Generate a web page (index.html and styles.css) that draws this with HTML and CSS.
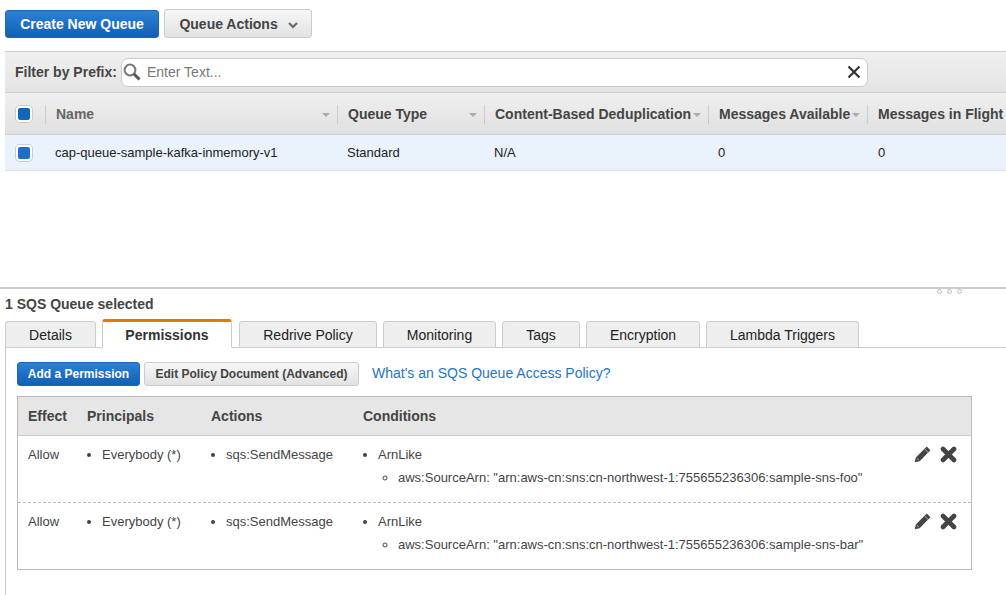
FILE: index.html
```html
<!DOCTYPE html>
<html lang="en">
<head>
    <meta charset="UTF-8">
    <meta name="viewport" content="width=device-width, initial-scale=1.0">
    <title>SQS Queues</title>
    <link rel="stylesheet" href="styles.css">
</head>
<body>
    <div class="toolbar">
        <button class="btn btn-primary btn-create">Create New Queue</button>
        <button class="btn btn-actions">Queue Actions
            <svg class="caret" width="10" height="7" viewBox="0 0 10 7"><path d="M1 1 L5 5 L9 1" fill="none" stroke="#666" stroke-width="2"/></svg>
        </button>
    </div>

    <div class="list-panel">
        <div class="filter-bar">
            <label class="filter-label">Filter by Prefix:</label>
            <div class="filter-input">
                <svg class="search-icon" width="18" height="18" viewBox="0 0 18 18"><circle cx="7" cy="7" r="5.4" fill="none" stroke="#777" stroke-width="2"/><path d="M11 11 L16.5 16.5" stroke="#555" stroke-width="3"/></svg>
                <span class="placeholder">Enter Text...</span>
                <svg class="clear-icon" width="14" height="14" viewBox="0 0 14 14"><path d="M1.5 1.5 L12.5 12.5 M12.5 1.5 L1.5 12.5" stroke="#333" stroke-width="2.2"/></svg>
            </div>
        </div>
        <div class="queue-head">
            <div class="cell-check"><span class="check"></span></div>
            <div class="col col-name">Name<i class="sort"></i></div>
            <div class="col col-type">Queue Type<i class="sort"></i></div>
            <div class="col col-dedup">Content-Based Deduplication<i class="sort"></i></div>
            <div class="col col-avail">Messages Available<i class="sort"></i></div>
            <div class="col col-flight">Messages in Flight</div>
        </div>
        <div class="queue-row">
            <div class="cell-check"><span class="check check-on"></span></div>
            <div class="col col-name">cap-queue-sample-kafka-inmemory-v1</div>
            <div class="col col-type">Standard</div>
            <div class="col col-dedup">N/A</div>
            <div class="col col-avail">0</div>
            <div class="col col-flight">0</div>
        </div>
    </div>

    <div class="splitter">
        <div class="grip"><i></i><i></i><i></i></div>
    </div>

    <div class="detail">
        <div class="selected-title">1 SQS Queue selected</div>
        <div class="tabs">
            <div class="tab tab-details">Details</div>
            <div class="tab tab-active">Permissions</div>
            <div class="tab tab-redrive">Redrive Policy</div>
            <div class="tab tab-monitoring">Monitoring</div>
            <div class="tab tab-tags">Tags</div>
            <div class="tab tab-encryption">Encryption</div>
            <div class="tab tab-lambda">Lambda Triggers</div>
        </div>
        <div class="tab-body">
            <div class="perm-actions">
                <button class="btn btn-primary btn-small btn-add">Add a Permission</button>
                <button class="btn btn-small btn-edit">Edit Policy Document (Advanced)</button>
                <a class="help-link" href="#">What's an SQS Queue Access Policy?</a>
            </div>
            <div class="perm-table">
                <div class="perm-head">
                    <div class="p-effect">Effect</div>
                    <div class="p-principals">Principals</div>
                    <div class="p-actions">Actions</div>
                    <div class="p-conditions">Conditions</div>
                </div>
                <div class="perm-row">
                    <div class="p-effect">Allow</div>
                    <div class="p-principals"><ul><li>Everybody (*)</li></ul></div>
                    <div class="p-actions"><ul><li>sqs:SendMessage</li></ul></div>
                    <div class="p-conditions">
                        <ul><li>ArnLike
                            <ul><li>aws:SourceArn: "arn:aws-cn:sns:cn-northwest-1:755655236306:sample-sns-foo"</li></ul>
                        </li></ul>
                    </div>
                    <div class="p-icons">
                        <svg width="17" height="17" viewBox="0 0 17 17"><path d="M12.8 0.6 L16.4 4.2 L5.6 15.2 L0.8 16.2 L1.8 11.4 Z" fill="#444"/><path d="M2.6 12 L5 14.4 M10.6 3 L14 6.4" stroke="#ccc" stroke-width="0.8"/></svg>
                        <svg width="17" height="17" viewBox="0 0 17 17"><path d="M3 3 L14 14 M14 3 L3 14" stroke="#444" stroke-width="4.6" stroke-linecap="round"/></svg>
                    </div>
                </div>
                <div class="perm-row perm-row-last">
                    <div class="p-effect">Allow</div>
                    <div class="p-principals"><ul><li>Everybody (*)</li></ul></div>
                    <div class="p-actions"><ul><li>sqs:SendMessage</li></ul></div>
                    <div class="p-conditions">
                        <ul><li>ArnLike
                            <ul><li>aws:SourceArn: "arn:aws-cn:sns:cn-northwest-1:755655236306:sample-sns-bar"</li></ul>
                        </li></ul>
                    </div>
                    <div class="p-icons">
                        <svg width="17" height="17" viewBox="0 0 17 17"><path d="M12.8 0.6 L16.4 4.2 L5.6 15.2 L0.8 16.2 L1.8 11.4 Z" fill="#444"/><path d="M2.6 12 L5 14.4 M10.6 3 L14 6.4" stroke="#ccc" stroke-width="0.8"/></svg>
                        <svg width="17" height="17" viewBox="0 0 17 17"><path d="M3 3 L14 14 M14 3 L3 14" stroke="#444" stroke-width="4.6" stroke-linecap="round"/></svg>
                    </div>
                </div>
            </div>
        </div>
    </div>
</body>
</html>
```

FILE: styles.css
```css
html, body {
    height: 595px;
    overflow: hidden;
}
body {
    margin: 0;
    font-family: "Liberation Sans", Arial, sans-serif;
    font-size: 13px;
    color: #444;
    background-color: #fff;
}
.toolbar {
    display: flex;
    align-items: flex-end;
    gap: 5px;
    height: 38px;
    padding-left: 5px;
    margin-bottom: 13px;
}
.btn {
    font-family: inherit;
    font-weight: bold;
    border-radius: 3px;
    cursor: pointer;
    padding: 0;
}
.btn-primary {
    color: #fff;
    background: linear-gradient(#2a82d7, #135fb2);
    border: 1px solid #1a66b8;
}
.btn-create {
    width: 154px;
    height: 28px;
    font-size: 14px;
}
.btn-actions {
    width: 148px;
    height: 29px;
    padding-left: 1px;
    font-size: 14px;
    color: #444;
    background: linear-gradient(#f7f7f7, #e2e2e2);
    border: 1px solid #ccc;
}
.caret {
    margin-left: 6px;
}
.list-panel {
    margin-left: 5px;
}
.filter-bar {
    display: flex;
    align-items: center;
    height: 40px;
    border-top: 1px solid #ccc;
    border-bottom: 1px solid #ccc;
    background: linear-gradient(#f0f0f0, #e4e4e4);
    padding-left: 10px;
}
.filter-label {
    font-size: 14px;
    font-weight: bold;
    width: 106px;
}
.filter-input {
    display: flex;
    align-items: center;
    width: 745px;
    height: 27px;
    background-color: #fff;
    border: 1px solid #ccc;
    border-radius: 7px;
}
.search-icon {
    margin-left: 1px;
}
.placeholder {
    flex: 1;
    margin-left: 6px;
    font-size: 14px;
    color: #777;
}
.clear-icon {
    margin-right: 6px;
}
.queue-head, .queue-row {
    display: flex;
    align-items: center;
    white-space: nowrap;
    overflow: hidden;
}
.queue-head {
    height: 40px;
    padding-top: 1px;
    border-bottom: 1px solid #ccc;
    background: linear-gradient(#f0f0f0, #e0e0e0);
    font-size: 14px;
    font-weight: bold;
}
.queue-row {
    height: 35px;
    border-bottom: 1px solid #ddd;
    background-color: #eaf2fc;
    font-size: 13px;
    color: #222;
}
.cell-check {
    flex: none;
    display: flex;
    align-items: center;
    width: 40px;
    height: 28px;
    padding-left: 11px;
    box-sizing: border-box;
}
.check {
    display: block;
    width: 12px;
    height: 12px;
    background-color: #1266be;
    border: 2px solid #fff;
    border-radius: 4px;
    box-shadow: 0 0 0 1px #ccc;
}
.check-on {
    background-color: #1e6fca;
}
.col {
    position: relative;
    flex: none;
    box-sizing: border-box;
    padding-left: 9px;
    height: 19px;
    line-height: 19px;
    border-left: 1px solid transparent;
}
.queue-head .col {
    padding-left: 10px;
    border-left-color: #ccc;
}
.queue-head .col-name {
    color: #666;
}
.col-name { width: 292px; }
.col-type { width: 147px; }
.col-dedup { width: 224px; }
.col-avail { width: 159px; }
.col-flight { width: 140px; }
.queue-row .col-flight { padding-left: 10px; }
.sort {
    position: absolute;
    right: 7px;
    top: 8px;
    width: 0;
    height: 0;
    border-left: 4px solid transparent;
    border-right: 4px solid transparent;
    border-top: 4px solid #aaa;
}
.splitter {
    position: relative;
    height: 2px;
    margin-top: 116px;
    background-color: #ccc;
}
.grip {
    position: absolute;
    right: 44px;
    top: 2px;
    display: flex;
    gap: 5px;
}
.grip i {
    display: block;
    width: 3px;
    height: 3px;
    border: 1px solid #bbb;
    border-radius: 50%;
}
.selected-title {
    margin: 8px 0 0 5px;
    font-size: 14px;
    font-weight: bold;
    line-height: 15px;
}
.tabs {
    display: flex;
    align-items: flex-end;
    gap: 6px;
    height: 28px;
    margin: 7px 0 0 5px;
    border-bottom: 1px solid #ccc;
    font-size: 14px;
}
.tab {
    box-sizing: border-box;
    height: 27px;
    margin-bottom: -1px;
    text-align: center;
    line-height: 27px;
    color: #222;
    background-color: #eee;
    border: 1px solid #ccc;
    border-radius: 3px 3px 0 0;
}
.tab-details { width: 91px; }
.tab-active {
    width: 130px;
    height: 29px;
    margin-right: 1px;
    font-weight: bold;
    color: #333;
    background-color: #fff;
    border-top: 3px solid #e07b00;
    border-bottom-color: #fff;
}
.tab-redrive { width: 138px; }
.tab-monitoring { width: 113px; }
.tab-tags { width: 78px; }
.tab-encryption { width: 114px; }
.tab-lambda { width: 153px; }
.tab-body {
    margin-left: 5px;
    padding: 14px 0 30px 11px;
    border-left: 1px solid #ccc;
}
.perm-actions {
    display: flex;
    align-items: center;
    height: 24px;
    margin-bottom: 10px;
}
.btn-small {
    height: 24px;
    font-size: 12px;
}
.btn-add { width: 123px; }
.btn-edit {
    width: 215px;
    margin-left: 4px;
    color: #444;
    background: linear-gradient(#f7f7f7, #e2e2e2);
    border: 1px solid #ccc;
}
.help-link {
    margin: 0 0 2px 13px;
    font-size: 14px;
    color: #1f76c4;
    text-decoration: none;
}
.perm-table {
    width: 953px;
    border: 1px solid #bbb;
}
.perm-head, .perm-row {
    display: flex;
}
.perm-head {
    align-items: center;
    height: 38px;
    background-color: #e6e6e6;
    border-bottom: 1px solid #ccc;
    font-size: 14px;
    font-weight: bold;
}
.perm-row {
    position: relative;
    height: 66px;
    border-bottom: 1px dashed #bbb;
    color: #444;
}
.perm-row-last {
    border-bottom: none;
}
.perm-row > div {
    padding-top: 11px;
    line-height: 15px;
}
.p-effect { width: 59px; padding-left: 10px; box-sizing: border-box; }
.p-principals { width: 124px; box-sizing: border-box; padding-left: 10px; }
.p-actions { width: 152px; box-sizing: border-box; padding-left: 10px; }
.p-conditions { flex: 1; box-sizing: border-box; padding-left: 10px; }
.perm-row ul {
    margin: 0;
    padding-left: 15px;
}
.perm-row ul ul {
    margin-top: 8px;
    padding-left: 20px;
}
.perm-row .p-icons {
    position: absolute;
    right: 14px;
    top: 0;
    display: flex;
    gap: 9px;
    padding-top: 10px;
}
```
